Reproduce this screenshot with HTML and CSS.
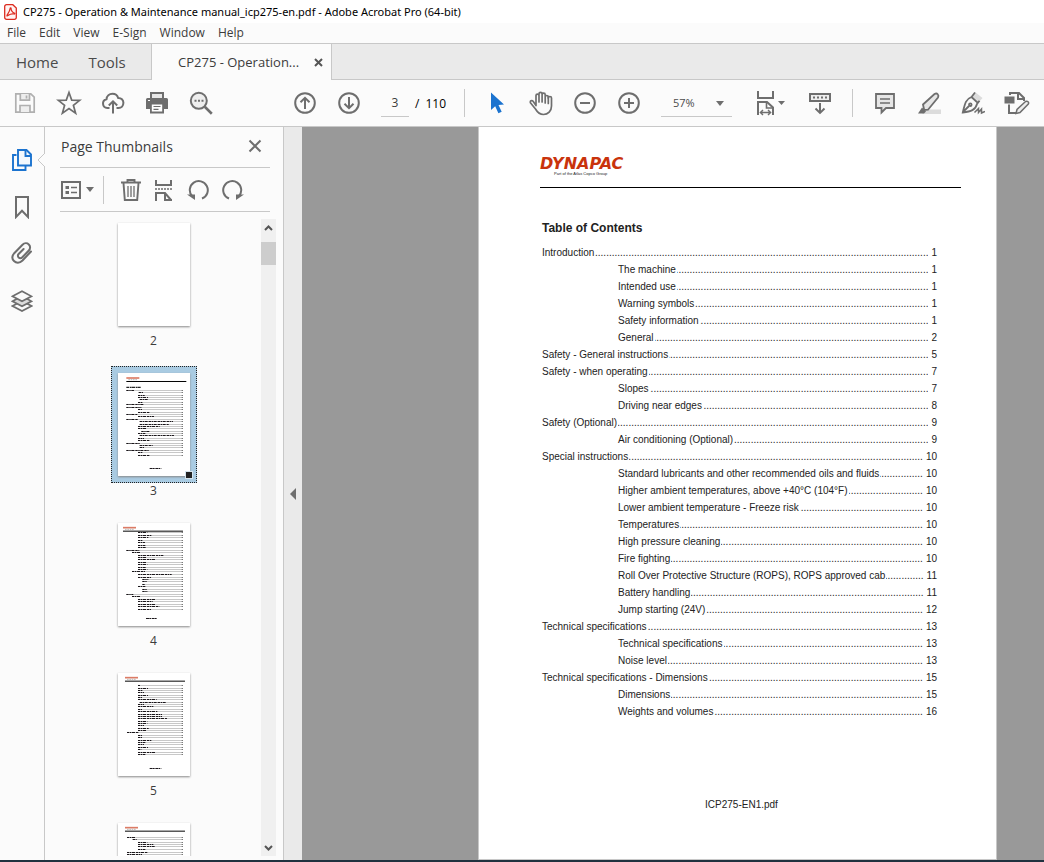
FILE: index.html
```html
<!DOCTYPE html>
<html lang="en">
<head>
<meta charset="utf-8">
<title>CP275 - Operation &amp; Maintenance manual_icp275-en.pdf - Adobe Acrobat Pro (64-bit)</title>
<link rel="stylesheet" href="styles.css">
</head>
<body>
<div class="app">
  <header class="titlebar">
    <svg class="app-icon" width="13" height="16" viewBox="0 0 13 16"><path d="M2.5.7h6.3l3.5 3.4v9.4a1.8 1.8 0 0 1-1.8 1.8h-8A1.8 1.8 0 0 1 .7 13.500V2.500A1.8 1.8 0 0 1 2.500.700z" fill="#fff4f3" stroke="#dc2c20" stroke-width="1.300"/><path d="M3 11.300c1-1.700 3-4.500 3.100-6.800 0-1 1-1 1 0-.2 2 1.700 4.200 3.200 4.500 1 .3.700 1.200-.3 1-2-.5-3.800 0-5.600 1.300-1 .8-1.900.8-1.400 0z" fill="none" stroke="#dc2c20" stroke-width="1.200"/></svg>
    <span>CP275 - Operation &amp; Maintenance manual_icp275-en.pdf - Adobe Acrobat Pro (64-bit)</span>
  </header>

  <nav class="menubar">
    <button type="button">File</button>
    <button type="button">Edit</button>
    <button type="button">View</button>
    <button type="button">E-Sign</button>
    <button type="button">Window</button>
    <button type="button">Help</button>
  </nav>

  <nav class="tabs">
    <div class="tabs-fixed">
      <button type="button" class="tab tab-home">Home</button>
      <button type="button" class="tab">Tools</button>
    </div>
    <div class="tab-active">
      <span>CP275 - Operation...</span>
      <button type="button" class="tab-close" aria-label="Close tab"><svg width="9" height="9" viewBox="0 0 9 9"><path d="M1 1l7 7M8 1L1 8" stroke="#555" stroke-width="2"/></svg></button>
    </div>
    <div class="tabs-rest"></div>
  </nav>

  <div class="toolbar">
    <div class="tools">
      <button type="button" aria-label="Save" disabled><svg width="24" height="24" viewBox="0 0 24 24" fill="none" stroke="#b0b0b0" stroke-width="1.700"><path d="M2.800 2.800h15l3.400 3.400v15H2.800z"/><path d="M7.300 3v6.200h9.200V3M7 21v-6.500h10V21" fill="#eee"/><path d="M13.500 4.500v3"/></svg></button>
      <button type="button" aria-label="Star"><svg width="26" height="26" viewBox="0 0 26 26" fill="none" stroke="#6e6e6e" stroke-width="1.700"><path d="M13 2.500l2.700 7.600 8 .2-6.300 5 2.200 7.900-6.600-4.600-6.600 4.600 2.200-7.900-6.300-5 8-.2z"/></svg></button>
      <button type="button" aria-label="Upload"><svg width="24" height="24" viewBox="0 0 24 24" fill="none" stroke="#6e6e6e" stroke-width="2"><path d="M8.500 17H6.300a4.400 4.400 0 0 1-.8-8.700C5.800 5 8.300 2.800 11.500 2.800c2.700 0 4.900 1.600 5.700 4.200 3.100-.1 5.200 2 5.200 4.800 0 3-2 5.200-4.900 5.200h-2"/><path d="M12 22.500V11M7.800 14.500L12 10.300l4.200 4.200"/></svg></button>
      <button type="button" aria-label="Print"><svg width="24" height="24" viewBox="0 0 24 24"><path d="M5 1h14v6H5z" fill="#6e6e6e"/><path d="M7 3h10v4H7z" fill="#e8e8e8"/><path d="M2.500 7h19A1.500 1.500 0 0 1 23 8.500V18H1V8.500A1.500 1.500 0 0 1 2.500 7z" fill="#6e6e6e"/><path d="M5.900 12.500h12.200v9H5.900z" fill="#fff" stroke="#6e6e6e" stroke-width="1.800"/><path d="M8.500 15.500h7M8.500 18.300h5" stroke="#6e6e6e" stroke-width="1.200"/><path d="M3 9.500h2" stroke="#fff"/></svg></button>
      <button type="button" aria-label="Find"><svg width="24" height="24" viewBox="0 0 24 24" fill="none" stroke="#6e6e6e"><circle cx="9.800" cy="9.800" r="8" stroke-width="2" fill="#eee"/><path d="M15.800 15.800l7 6.900" stroke-width="2.600"/><path d="M5.500 9.800h9" stroke-width="2" stroke-dasharray="2 1.500"/></svg></button>
    </div>
    <div class="tools tools-pages">
      <button type="button" aria-label="Previous page"><svg width="24" height="24" viewBox="0 0 24 24" fill="none" stroke="#6e6e6e" stroke-width="2"><circle cx="12" cy="12" r="9.800"/><path d="M12 18V7.500M7.500 11.200L12 6.800l4.500 4.400"/></svg></button>
      <button type="button" aria-label="Next page"><svg width="24" height="24" viewBox="0 0 24 24" fill="none" stroke="#6e6e6e" stroke-width="2"><circle cx="12" cy="12" r="9.800"/><path d="M12 6v10.500M7.500 12.800l4.500 4.400 4.500-4.400"/></svg></button>
    </div>
    <label class="page-number"><input type="text" value="3" aria-label="Page number"><span>/</span><span>110</span></label>
    <div class="separator"></div>
    <div class="tools tools-view">
      <button type="button" aria-label="Select"><svg width="24" height="24" viewBox="0 0 24 24"><path d="M6 1.500V19l4.200-3.800 3.200 7.100 3.300-1.500-3.200-6.900 5.500-.5z" fill="#1b73cf"/></svg></button>
      <button type="button" aria-label="Pan"><svg width="24" height="26" viewBox="0 0 24 26" fill="none" stroke="#6e6e6e" stroke-width="1.700" stroke-linecap="round" stroke-linejoin="round"><path d="M7 15.500V5.600c0-2 3-2 3 0V12 4c0-2.100 3.100-2.100 3.100 0v8-7.300c0-2 3.100-2 3.100 0V13 7c0-2 3.100-2 3.100 0v1c0-2 3.200-2 3.200 0v8c0 5-3.500 8.500-8 8.500-4 0-6-2-8-5.500L1.600 13c-1-2 1.200-3.200 2.500-1.700L7 15.500"/><path d="M19.300 7v6.500"/></svg></button>
      <button type="button" aria-label="Zoom out"><svg width="24" height="24" viewBox="0 0 24 24" fill="none" stroke="#6e6e6e" stroke-width="2"><circle cx="12" cy="12" r="9.800"/><path d="M7 12h10"/></svg></button>
      <button type="button" aria-label="Zoom in"><svg width="24" height="24" viewBox="0 0 24 24" fill="none" stroke="#6e6e6e" stroke-width="2"><circle cx="12" cy="12" r="9.800"/><path d="M7 12h10M12 7v10"/></svg></button>
    </div>
    <label class="zoom-level"><select aria-label="Zoom level"><option>57%</option></select><svg class="zoom-caret" width="8" height="5" viewBox="0 0 8 5"><path d="M0 0h8L4 5z" fill="#6e6e6e"/></svg></label>
    <div class="tools tools-page-view">
      <button type="button" class="wide" aria-label="Fit width"><svg width="20" height="26" viewBox="0 0 20 26" fill="none" stroke="#6e6e6e" stroke-width="2"><path d="M2 1v7h15V1M2 25V12h9l6 5.500V25"/><path d="M10.500 12.500v5.500H17" stroke-width="1.600"/><path d="M4.500 22.500h10M7 20l-2.600 2.500L7 25M12 20l2.600 2.500L12 25" stroke-width="1.400"/></svg><svg width="7" height="4" viewBox="0 0 7 4"><path d="M0 0h7L3.500 4z" fill="#6e6e6e"/></svg></button>
      <button type="button" aria-label="Scroll mode"><svg width="24" height="24" viewBox="0 0 24 24" fill="none" stroke="#6e6e6e" stroke-width="2"><path d="M2 3h20v7H2z" fill="#eee"/><path d="M5 6.500h14" stroke-dasharray="2 2"/><path d="M12 12v9.500M7.500 17.500l4.500 4.400 4.500-4.400"/></svg></button>
    </div>
    <div class="separator"></div>
    <div class="tools tools-comment">
      <button type="button" aria-label="Comment"><svg width="24" height="24" viewBox="0 0 24 24" fill="#e6e6e6" stroke="#6e6e6e" stroke-width="1.800"><path d="M3 3h18v14h-8l-4.500 4.500V17H3z"/><path d="M7 8h10M7 12h10" stroke-width="1.300"/></svg></button>
      <button type="button" aria-label="Highlight"><svg width="24" height="24" viewBox="0 0 24 24"><path d="M8 18.500h16v4.500H5z" fill="#dcdcdc"/><path d="M1 22.500l4-6 4 4-2 2z" fill="#6e6e6e"/><path d="M6 13.500L17.500 3c2.700-1.500 4.800 1 3.500 3.500l-10 12.200-3.800.3z" fill="#e6e6e6" stroke="#6e6e6e" stroke-width="1.800"/></svg></button>
      <button type="button" aria-label="Sign"><svg width="24" height="24" viewBox="0 0 24 24" fill="none" stroke="#6e6e6e" stroke-width="1.800"><path d="M14 1l7.500 6-3.500 4-6.500-5.500z" fill="#dcdcdc" stroke="none"/><path d="M14 1.500L10.500 6C5 8 4 12 1.800 21.500 10 20.500 14.500 19 16 13l2.500-3.200M10.500 6l6.500 6M2 21l6-6"/><circle cx="9.300" cy="13.700" r="1.300"/><path d="M13.500 21.500l4-4v4l3-3.500v4l3.500-1.500" stroke-width="1.500"/></svg></button>
      <button type="button" aria-label="Edit PDF"><svg width="26" height="24" viewBox="0 0 26 24" fill="none" stroke="#6e6e6e" stroke-width="2"><path d="M6 4V2h9l5 5v3M14 2v6h6M5 13.500V22h7"/><path d="M1.500 6.500h8v5h-8z" fill="#6e6e6e"/><path d="M12 22.500l1-4 8.500-8c2-1 3.800.8 2.800 2.500l-8.300 8.500z" fill="#eee" stroke-width="1.500"/></svg></button>
    </div>
  </div>

  <main class="workspace">
    <nav class="rail">
      <button type="button" aria-label="Page thumbnails" aria-current="true"><svg width="22" height="24" viewBox="0 0 22 24" fill="none" stroke="#1b73cf" stroke-width="1.900"><path d="M5.500 7H2v15h12.500v-4"/><path d="M7 2h8.500L20 6.500V17.500H7z" fill="#f2f8fd"/><path d="M14.500 2v6H20"/></svg></button>
      <button type="button" aria-label="Bookmarks"><svg width="16" height="24" viewBox="0 0 16 24" fill="none" stroke="#6e6e6e" stroke-width="2"><path d="M2 2h12v20l-6-6.200L2 22z"/></svg></button>
      <button type="button" aria-label="Attachments"><svg width="22" height="24" viewBox="0 0 22 24" fill="none" stroke="#6e6e6e" stroke-width="2" stroke-linecap="round"><path d="M20 9.500l-8.500 9c-3 3-6.500 2.500-8.500.5s-2-5 0-7.500l8.500-8.700c2-2 4.700-1.900 6.300-.4s1.800 4.200 0 6.100l-6.500 6.800c-1.300 1.300-2.800 1-3.700.2s-1-2.500 0-3.500l5-5"/></svg></button>
      <button type="button" aria-label="Layers"><svg width="22" height="24" viewBox="0 0 22 24" fill="#fbfbfb" stroke="#6e6e6e" stroke-width="1.700"><path d="M1.500 17L11 12l9.500 5L11 22z"/><path d="M1.500 12.300L11 7l9.500 5.300-9.500 5z" fill="#dcdcdc"/><path d="M1.500 7.300L11 2.300l9.500 5-9.500 5z"/></svg></button>
      <svg class="rail-pointer" width="8" height="14" viewBox="0 0 8 14"><path d="M8 0L1 7l7 7" fill="#fbfbfb" stroke="#c8c8c8"/></svg>
    </nav>

    <section class="panel">
      <div class="panel-head">
        <h2>Page Thumbnails</h2>
        <button type="button" aria-label="Close panel"><svg width="14" height="14" viewBox="0 0 14 14"><path d="M1.500 1.500l11 11M12.500 1.500l-11 11" stroke="#6e6e6e" stroke-width="2"/></svg></button>
      </div>
      <div class="panel-tools">
        <button type="button" class="options" aria-label="Options"><svg width="20" height="18" viewBox="0 0 20 18" fill="none" stroke="#6e6e6e" stroke-width="2"><path d="M1 1h18v16H1z"/><path d="M4.500 6.500h3.500M4.500 11.500h3.500" stroke-width="3"/><path d="M10 6.500h6M10 11.500h6" stroke-width="1.500"/></svg><svg width="8" height="5" viewBox="0 0 8 5"><path d="M0 0h8L4 5z" fill="#6e6e6e"/></svg></button>
        <div class="panel-separator"></div>
        <button type="button" aria-label="Delete pages"><svg width="20" height="24" viewBox="0 0 20 24" fill="none" stroke="#6e6e6e" stroke-width="1.900"><path d="M0 4.500h20M6.500 4V2h7v2M2.500 5l1.300 17h12.400l1.300-17"/><path d="M7 8v11M10 8v11M13 8v11" stroke-width="1.300"/></svg></button>
        <button type="button" aria-label="Split pages"><svg width="20" height="24" viewBox="0 0 20 24" fill="none" stroke="#6e6e6e" stroke-width="2"><path d="M2 2v5h15V2M2 23v-8h9l6 7M11 15v7h7"/><path d="M1 11h17" stroke-width="1.500" stroke-dasharray="2 1"/></svg></button>
        <button type="button" aria-label="Rotate left"><svg width="22" height="22" viewBox="0 0 22 22" fill="none" stroke="#6e6e6e" stroke-width="2"><path d="M5 17A9 9 0 1 1 15 19.500"/><path d="M0 15.500h8V21z" fill="#6e6e6e" stroke="none"/></svg></button>
        <button type="button" aria-label="Rotate right"><svg width="22" height="22" viewBox="0 0 22 22" fill="none" stroke="#6e6e6e" stroke-width="2"><path d="M17 17A9 9 0 1 0 7 19.500"/><path d="M22 15.500h-8V21z" fill="#6e6e6e" stroke="none"/></svg></button>
      </div>
      <div class="thumbs">
        <div class="thumb-list">
          <button type="button" class="thumb"><span class="thumb-frame"><svg class="sheet" viewBox="0 0 72 103"></svg></span><span class="thumb-label">2</span></button>
          <button type="button" class="thumb selected"><span class="thumb-frame"><svg class="sheet" data-sheet="3" viewBox="0 0 72 103"></svg><span class="thumb-handle"></span></span><span class="thumb-label">3</span></button>
          <button type="button" class="thumb"><span class="thumb-frame"><svg class="sheet" data-sheet="4" viewBox="0 0 72 103"></svg></span><span class="thumb-label">4</span></button>
          <button type="button" class="thumb"><span class="thumb-frame"><svg class="sheet" data-sheet="5" viewBox="0 0 72 103"></svg></span><span class="thumb-label">5</span></button>
          <button type="button" class="thumb" aria-label="Next thumbnail"><span class="thumb-frame"><svg class="sheet" data-sheet="6" viewBox="0 0 72 103"></svg></span></button>
        </div>
        <div class="scrollbar">
          <svg width="9" height="6" viewBox="0 0 9 6"><path d="M1 5l3.500-3.500L8 5" fill="none" stroke="#555" stroke-width="2"/></svg>
          <div class="scroll-grip"></div>
          <svg width="9" height="6" viewBox="0 0 9 6"><path d="M1 1l3.500 3.500L8 1" fill="none" stroke="#555" stroke-width="2"/></svg>
        </div>
      </div>
    </section>

    <button type="button" class="splitter" aria-label="Collapse panel"><svg width="6" height="12" viewBox="0 0 6 12"><path d="M6 0v12L0 6z" fill="#6e6e6e"/></svg></button>

    <div class="document">
      <article class="page">
        <div class="brand">
          <div class="brand-name">DYNAPAC</div>
          <div class="brand-note">Part of the Atlas Copco Group</div>
        </div>
        <h1>Table of Contents</h1>
        <ol class="toc">
          <li><span>Introduction</span><i></i><b>1</b></li>
          <li class="sub"><span>The machine</span><i></i><b>1</b></li>
          <li class="sub"><span>Intended use</span><i></i><b>1</b></li>
          <li class="sub"><span>Warning symbols</span><i></i><b>1</b></li>
          <li class="sub"><span>Safety information</span><i></i><b>1</b></li>
          <li class="sub"><span>General</span><i></i><b>2</b></li>
          <li><span>Safety - General instructions</span><i></i><b>5</b></li>
          <li><span>Safety - when operating</span><i></i><b>7</b></li>
          <li class="sub"><span>Slopes</span><i></i><b>7</b></li>
          <li class="sub"><span>Driving near edges</span><i></i><b>8</b></li>
          <li><span>Safety (Optional)</span><i></i><b>9</b></li>
          <li class="sub"><span>Air conditioning (Optional)</span><i></i><b>9</b></li>
          <li><span>Special instructions</span><i></i><b>10</b></li>
          <li class="sub"><span>Standard lubricants and other recommended oils and fluids</span><i></i><b>10</b></li>
          <li class="sub"><span>Higher ambient temperatures, above +40°C (104°F)</span><i></i><b>10</b></li>
          <li class="sub"><span>Lower ambient temperature - Freeze risk</span><i></i><b>10</b></li>
          <li class="sub"><span>Temperatures</span><i></i><b>10</b></li>
          <li class="sub"><span>High pressure cleaning</span><i></i><b>10</b></li>
          <li class="sub"><span>Fire fighting</span><i></i><b>10</b></li>
          <li class="sub"><span>Roll Over Protective Structure (ROPS), ROPS approved cab</span><i></i><b>11</b></li>
          <li class="sub"><span>Battery handling</span><i></i><b>11</b></li>
          <li class="sub"><span>Jump starting (24V)</span><i></i><b>12</b></li>
          <li><span>Technical specifications</span><i></i><b>13</b></li>
          <li class="sub"><span>Technical specifications</span><i></i><b>13</b></li>
          <li class="sub"><span>Noise level</span><i></i><b>13</b></li>
          <li><span>Technical specifications - Dimensions</span><i></i><b>15</b></li>
          <li class="sub"><span>Dimensions</span><i></i><b>15</b></li>
          <li class="sub"><span>Weights and volumes</span><i></i><b>16</b></li>
        </ol>
        <footer>ICP275-EN1.pdf</footer>
      </article>
    </div>
  </main>
  <div class="taskbar-edge"></div>
</div>
<script src="thumbs.js"></script>
</body>
</html>
```

FILE: styles.css
```css
* { box-sizing: border-box; }

body {
  margin: 0;
  background: #fbfbfb;
  color: #3c3c3c;
  font-family: "Open Sans", "Noto Sans", sans-serif;
  font-size: 12px;
}

button {
  padding: 0;
  border: 0;
  background: none;
  color: inherit;
  font: inherit;
}

svg { display: block; flex: none; }

.app { display: flex; flex-direction: column; height: 100vh; }

.titlebar {
  display: flex;
  align-items: center;
  gap: 6px;
  height: 23px;
  padding-left: 4px;
  background: #fff;
  color: #000;
  font-family: "Noto Sans", sans-serif;
  font-size: 11px;
  white-space: nowrap;
}

.menubar {
  display: flex;
  align-items: center;
  gap: 13px;
  height: 20px;
  padding: 0 0 2px 7px;
}

.tabs { display: flex; height: 37px; border-top: 1px solid #c8c8c8; }
.tabs-fixed,
.tabs-rest { background: #eaeaea; border-bottom: 1px solid #c8c8c8; }
.tabs-fixed { display: flex; width: 152px; gap: 30px; padding-left: 16px; border-right: 1px solid #c8c8c8; }
.tabs-rest { flex: 1; border-left: 1px solid #c8c8c8; }
.tab { color: #4b4b4b; font-size: 15px; }
.tab-active {
  display: flex;
  align-items: center;
  justify-content: space-between;
  width: 179px;
  padding: 0 8px 0 26px;
  font-size: 13px;
  white-space: nowrap;
}

.toolbar {
  display: flex;
  align-items: center;
  height: 47px;
  padding-left: 3px;
  border-bottom: 1px solid #c8c8c8;
}
.tools { display: flex; }
.tools button {
  display: flex;
  align-items: center;
  justify-content: center;
  width: 44px;
  height: 36px;
}
.tools-pages { margin-left: 60px; }
.tools-view { margin-left: 10px; }
.tools-page-view { margin: 0 10px 0 16px; }
.tools-page-view .wide { width: 50px; gap: 2px; padding-right: 5px; }
.tools-comment { margin-left: 10px; }
.separator { width: 1px; height: 28px; background: #c8c8c8; }

.page-number { display: flex; align-items: center; gap: 6px; margin: 0 18px 0 10px; color: #000; }
.page-number input {
  width: 28px;
  height: 28px;
  padding: 0;
  border: 0;
  border-bottom: 1px solid #c8c8c8;
  background: none;
  color: #3c3c3c;
  font: inherit;
  text-align: center;
}

.zoom-level { position: relative; margin-left: 10px; }
.zoom-level select {
  display: block;
  width: 71px;
  height: 28px;
  padding: 0 0 0 12px;
  border: 0;
  border-bottom: 1px solid #c8c8c8;
  border-radius: 0;
  background: none;
  color: #4b4b4b;
  font: inherit;
  font-size: 11px;
  appearance: none;
}
.zoom-caret { position: absolute; right: 8px; top: 12px; pointer-events: none; }

.workspace { display: flex; flex: 1; min-height: 0; }

.rail {
  position: relative;
  display: flex;
  flex-direction: column;
  align-items: center;
  gap: 23px;
  width: 45px;
  padding-top: 21px;
  border-right: 1px solid #c8c8c8;
}
.rail-pointer { position: absolute; top: 26px; right: -1px; }

.panel {
  display: flex;
  flex-direction: column;
  width: 239px;
  padding-left: 15px;
  border-right: 1px solid #c8c8c8;
}
.panel-head,
.panel-tools { display: flex; align-items: center; margin-right: 13px; border-bottom: 1px solid #c8c8c8; }
.panel-head { justify-content: space-between; height: 41px; padding: 0 8px 2px 1px; }
.panel-head h2 { margin: 0; font-size: 14px; font-weight: 400; }
.panel-tools { height: 44px; gap: 13px; }
.options { display: flex; align-items: center; gap: 5px; padding-left: 1px; }
.panel-separator { width: 1px; height: 28px; margin-left: -4px; margin-right: 4px; background: #c8c8c8; }

.thumbs { display: flex; flex: 1; min-height: 0; margin-bottom: 4px; }
.thumb-list {
  display: flex;
  flex: 1;
  flex-direction: column;
  align-items: center;
  gap: 18px;
  padding: 4px 14px 0 0;
  overflow: hidden;
}
.thumb { flex: none; }
.thumb-frame { position: relative; display: block; padding: 7px; }
.selected .thumb-frame { background: #a9cbe2; outline: 1px dotted #222; outline-offset: -1px; }
.sheet { width: 72px; height: 103px; background: #fff; box-shadow: 0 1px 2px #888; }
.thumb-handle {
  position: absolute;
  right: 4px;
  bottom: 4px;
  width: 8px;
  height: 8px;
  border: 1px solid #d5e4ee;
  background: #222;
}
.thumb-label { display: block; line-height: 15px; }

.scrollbar {
  display: flex;
  flex-direction: column;
  align-items: center;
  width: 15px;
  margin: 7px 7px 0 0;
  padding: 6px 0 5px;
  background: #f0f0f0;
}
.scroll-grip { width: 15px; height: 23px; margin: 11px 0 auto; background: #cdcdcd; }

.splitter {
  display: flex;
  align-items: center;
  justify-content: center;
  width: 18px;
  background: #eaeaea;
}

.document { flex: 1; padding-left: 176px; background: #999; overflow: hidden; }
.page {
  display: flex;
  flex-direction: column;
  width: 519px;
  height: 100%;
  padding: 30px 35px 47px 61px;
  border: solid #c8c8c8;
  border-width: 0 1px 1px;
  background: #fff;
  color: #222;
  font-family: "Liberation Sans", Arial, sans-serif;
}
.brand { height: 31px; border-bottom: 1px solid #000; }
.brand-name {
  color: #c9330c;
  font: italic bold 16px/14px "DejaVu Sans", sans-serif;
}
.brand-note { padding-left: 14px; font-size: 4px; line-height: 5px; }
.page h1 { margin: 32px 0 0 2px; font-size: 12px; line-height: 16px; }
.toc {
  margin: 8px 24px 0 2px;
  padding: 0;
  font-size: 10px;
  line-height: 17px;
  list-style: none;
}
.toc li { display: flex; white-space: nowrap; }
.toc .sub { padding-left: 76px; }
.toc i {
  display: flex;
  flex: 1;
  justify-content: flex-end;
  min-width: 0;
  margin: 0 3px 0 1px;
  overflow: hidden;
  font-style: normal;
}
.toc i::before {
  content: "................................................................................................................................................................";
}
.toc b { font-weight: 400; }
.page footer { margin: auto 18px 0 0; font-size: 10px; line-height: 14px; text-align: center; }

.taskbar-edge { height: 2px; background: #20323f; }
```

FILE: thumbs.js
```js
// Miniature pages: each row is [y, text start, text end] in thirds of a pixel.
const sheets = {
  3: { left: 25, ruleY: 26, title: true, footer: [95, 130], rows: [
    [52,25,48],[58,62,76],[67,60,80],[73,60,90],[79,65,92],[88,60,74],[94,25,78],[103,25,70],[109,60,72],
    [118,60,94],[124,25,58],[130,60,108],[139,25,60],[145,65,165],[154,65,152],[160,60,125],[166,60,84],
    [175,70,94],[181,60,82],[187,65,168],[196,60,78],[202,60,94],[211,25,66],[217,65,104],[223,65,78],
    [232,25,94],[238,60,74],[247,60,96]] },
  4: { left: 15, ruleY: 25, footer: [84, 118], rows: [
    [29,60,88],[37,60,101],[43,60,91],[52,60,74],[58,60,81],[67,60,82],[73,60,83],[82,25,64],[88,42,66],
    [97,60,136],[103,60,84],[109,60,111],[118,60,86],[124,60,88],[133,60,83],[139,60,88],[145,42,81],
    [154,60,161],[163,60,99],[169,73,91],[175,73,86],[184,73,81],[190,60,82],[199,73,88],[205,73,89],
    [214,25,46],[220,42,66],[229,60,111],[235,60,104],[244,60,111],[250,60,124],[259,60,99]] },
  5: { left: 21, ruleY: 25, footer: [95, 130], rows: [
    [37,60,66],[46,60,90],[52,60,75],[58,60,78],[67,60,90],[73,60,72],[79,60,116],[88,65,144],[94,60,78],
    [100,60,106],[109,60,72],[115,60,118],[124,60,132],[130,60,132],[136,60,147],[145,60,88],[151,60,88],
    [157,60,78],[166,60,92],[172,60,84],[178,27,62],[187,60,72],[193,60,72],[202,60,102],[208,60,82],
    [214,60,78],[223,60,90],[229,60,70],[238,60,112],[244,60,82]] },
  6: { left: 21, ruleY: 25, rows: [
    [43,27,54],[49,44,56],[58,60,88],[64,60,106],[70,60,110],[79,60,82],[88,27,88],[94,27,72]] }
};

function line(x1, x2, y, colour, width, dash) {
  return `<path d="M${x1} ${y}H${x2}" stroke="${colour}" stroke-width="${width}"${dash ? ` stroke-dasharray="${dash}"` : ""}/>`;
}

document.querySelectorAll("[data-sheet]").forEach(svg => {
  const s = sheets[svg.dataset.sheet];
  let out = line(s.left, s.left + 39, s.ruleY - 11, "#dc7c66", 5);
  out += line(s.left + 6, s.left + 34, s.ruleY - 6, "#bbb", 3, "5 2");
  out += line(s.left, s.left + 180, s.ruleY - 0.5, "#000", 3);
  if (s.title) out += line(25, 70, 43, "#222", 4, "9 2 5 1");
  s.rows.forEach(([y, from, to]) => {
    const rowY = Math.floor(y / 3) * 3 + 1.5;
    out += line(from, 195, rowY, "#c8c8c8", 3);
    out += line(from, to, rowY, "#181418", 3, "7 2 4 2 9 3");
    out += line(191, 195, rowY, "#777", 3);
  });
  if (s.footer) out += line(s.footer[0], s.footer[1], 286.5, "#181418", 3, "9 1 5 2");
  svg.innerHTML = `<g transform="scale(.3333)" fill="none">${out}</g>`;
});
```
